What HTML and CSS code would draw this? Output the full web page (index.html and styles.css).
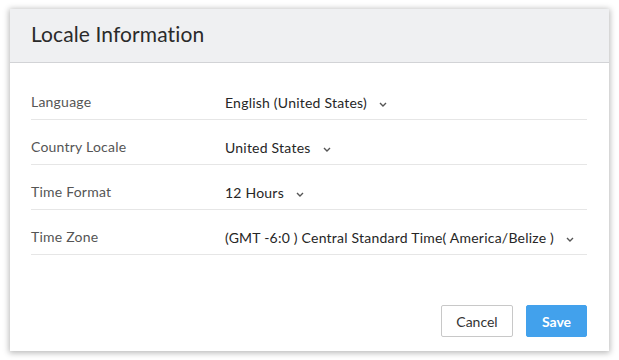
FILE: index.html
```html
<!DOCTYPE html>
<html>
<head>
<meta charset="utf-8">
<link rel="stylesheet" href="styles.css">
</head>
<body>
<div class="dialog">
  <div class="dialog-header">
    <h1 class="title">Locale Information</h1>
  </div>
  <div class="dialog-body">
    <div class="row">
      <div class="label">Language</div>
      <div class="value">English (United States)<svg class="chev" width="8" height="5" viewBox="0 0 8 5"><path d="M1 1l3 3 3-3" fill="none" stroke="#555" stroke-width="1.4"/></svg></div>
    </div>
    <div class="row">
      <div class="label">Country Locale</div>
      <div class="value">United States<svg class="chev" width="8" height="5" viewBox="0 0 8 5"><path d="M1 1l3 3 3-3" fill="none" stroke="#555" stroke-width="1.4"/></svg></div>
    </div>
    <div class="row">
      <div class="label">Time Format</div>
      <div class="value">12 Hours<svg class="chev" width="8" height="5" viewBox="0 0 8 5"><path d="M1 1l3 3 3-3" fill="none" stroke="#555" stroke-width="1.4"/></svg></div>
    </div>
    <div class="row">
      <div class="label">Time Zone</div>
      <div class="value">(GMT -6:0 ) Central Standard Time( America/Belize )<svg class="chev" width="8" height="5" viewBox="0 0 8 5"><path d="M1 1l3 3 3-3" fill="none" stroke="#555" stroke-width="1.4"/></svg></div>
    </div>
  </div>
  <div class="dialog-footer">
    <button class="btn btn-cancel">Cancel</button>
    <button class="btn btn-save">Save</button>
  </div>
</div>
</body>
</html>
```
FILE: styles.css
```css
html, body {
  margin: 0;
  padding: 0;
  background: #ffffff;
}
body {
  padding: 9px 10px;
  font-family: Lato, "Open Sans", sans-serif;
}
.dialog {
  width: 599px;
  height: 342px;
  box-sizing: border-box;
  background: #fff;
  box-shadow: 0 1px 6px 1px rgba(0,0,0,0.28);
  display: flex;
  flex-direction: column;
}
.dialog-header {
  height: 54px;
  box-sizing: border-box;
  background: #eff0f2;
  border-bottom: 1px solid #d2d3d6;
  display: flex;
  align-items: center;
  padding: 0 21px;
}
.title {
  margin: 0;
  font-size: 21px;
  font-weight: 400;
  color: #2a2a2a;
  padding-bottom: 5px;
  letter-spacing: 0.1px;
}
.dialog-body {
  padding: 12px 22px 0 21px;
}
.row {
  display: flex;
  height: 45px;
  box-sizing: border-box;
  border-bottom: 1px solid #e6e6e6;
  padding-top: 17px;
  font-size: 14px;
  letter-spacing: 0.22px;
}
.label {
  width: 194px;
  color: #555;
  line-height: 20px;
}
.value {
  color: #262626;
  line-height: 20px;
  padding-top: 1px;
  display: flex;
  align-items: center;
  height: 20px;
}
.chev {
  margin-left: 12px;
  margin-top: 2px;
}
.dialog-footer {
  margin-top: auto;
  display: flex;
  justify-content: flex-end;
  gap: 13px;
  padding: 0 22px 14px 0;
}
.btn {
  height: 32px;
  box-sizing: border-box;
  font-family: Lato, "Open Sans", sans-serif;
  font-size: 14px;
  border-radius: 2px;
  cursor: pointer;
}
.btn-cancel {
  width: 72px;
  background: #fff;
  border: 1px solid #c8c8c8;
  color: #333;
}
.btn-save {
  width: 61px;
  background: #42a1ec;
  border: 1px solid #42a1ec;
  color: #fff;
  font-weight: 700;
}
```
